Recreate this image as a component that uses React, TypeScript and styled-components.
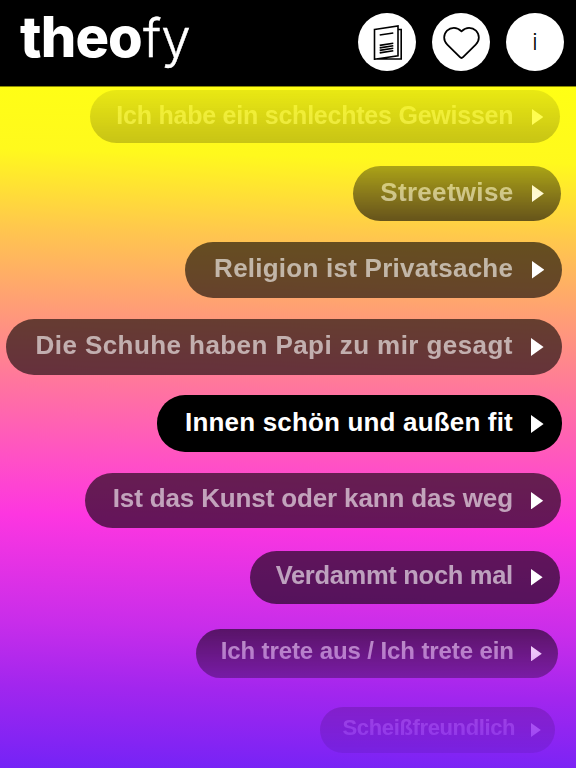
import React from "react";
import styled, { createGlobalStyle } from "styled-components";

const GlobalStyle = createGlobalStyle`
  * { box-sizing: border-box; }
  body { margin: 0; background: #000; }
`;

const Screen = styled.div`
  width: 576px;
  height: 768px;
  display: flex;
  flex-direction: column;
  overflow: hidden;
  font-family: "Liberation Sans", Arial, sans-serif;
  background: #000;
`;

const Header = styled.header`
  flex: 0 0 86px;
  display: flex;
  justify-content: space-between;
  padding: 13px 12px 0 20px;
`;

const Logo = styled.h1`
  display: flex;
  align-items: baseline;
  margin: 0;
  height: 60px;
  color: #fff;
  font-family: Inter, sans-serif;
  font-size: 56px;
  line-height: 49px;
  white-space: nowrap;
`;

const LogoBold = styled.span`
  width: 123px;
  font-weight: 800;
  letter-spacing: -0.9px;
`;

const LogoThin = styled.span`
  font-size: 53px;
  font-weight: 300;
  font-variant-ligatures: none;
  letter-spacing: 0;
  -webkit-text-stroke: 0.4px #fff;
`;

const Actions = styled.nav`
  display: flex;
  gap: 16px;
`;

const RoundButton = styled.button`
  width: 58px;
  height: 58px;
  padding: 0;
  border: 0;
  border-radius: 50%;
  display: flex;
  align-items: center;
  justify-content: center;
  background: #fff;
  color: #000;
  font: 300 23px/58px Inter, sans-serif;
`;

const Topics = styled.main`
  flex: 1;
  min-height: 0;
  border-top: 1px solid #8a8a00;
  background: linear-gradient(
    181.5deg,
    #ffff14 0%,
    #fff91d 11%,
    #ffc64e 22.5%,
    #ff9d76 33.5%,
    #ff759e 44.5%,
    #ff50c6 55.5%,
    #fd36e0 63.5%,
    #c82dea 79%,
    #a226ee 88%,
    #7423f6 100%
  );
`;

/* The wheel fades out towards its upper and lower ends. */
const Wheel = styled.ul`
  display: flex;
  flex-direction: column;
  align-items: flex-end;
  margin: 0;
  padding: 3px 0 0;
  height: 681px;
  list-style: none;
  mask-image: linear-gradient(
    180deg,
    rgba(0, 0, 0, 0.14) 3px,
    rgba(0, 0, 0, 0.36) 56px,
    rgba(0, 0, 0, 0.55) 79px,
    #000 134px,
    #000 520px,
    rgba(0, 0, 0, 0.93) 542px,
    rgba(0, 0, 0, 0.5) 591px,
    rgba(0, 0, 0, 0.25) 620px,
    rgba(0, 0, 0, 0.12) 666px
  );
`;

type PillProps = {
  $w: number;
  $h: number;
  $after: number;
  $edge: number;
  $pad: number;
  $active?: boolean;
};

const Pill = styled.li<PillProps>`
  flex: none;
  display: flex;
  align-items: center;
  justify-content: flex-end;
  width: ${(p) => p.$w}px;
  height: ${(p) => p.$h}px;
  margin: 0 ${(p) => p.$edge}px ${(p) => p.$after}px 0;
  padding-right: ${(p) => p.$pad}px;
  border-radius: 28px;
  color: ${(p) => (p.$active ? "#fff" : "rgba(255, 255, 255, 0.6)")};
  background: ${(p) => (p.$active ? "#000" : "rgba(0, 0, 0, 0.6)")};
`;

const Label = styled.span<{ $size: number; $track: number; $gap?: number }>`
  padding-bottom: 4px;
  margin-right: ${(p) => p.$gap ?? 18.5}px;
  font-weight: 700;
  font-size: ${(p) => p.$size}px;
  letter-spacing: ${(p) => p.$track}px;
  line-height: 30px;
  white-space: nowrap;
`;

const Arrow = styled.svg`
  flex: none;
  fill: #fff;
`;

const topics = [
  { text: "Ich habe ein schlechtes Gewissen", w: 469.5, h: 53, after: 23, edge: 16.5, pad: 16.5, size: 25, track: -0.23, arrow: 16 },
  { text: "Streetwise", w: 207.8, h: 55, after: 21, edge: 15.2, pad: 17, size: 26, track: 0.3, arrow: 17 },
  { text: "Religion ist Privatsache", w: 376.8, h: 56.4, after: 20.4, edge: 14.2, pad: 17.8, size: 26, track: 0.24, arrow: 17.6 },
  { text: "Die Schuhe haben Papi zu mir gesagt", w: 556, h: 56.7, after: 19.9, edge: 14, pad: 18, size: 26, track: 0.43, arrow: 18 },
  { text: "Innen schön und außen fit", w: 405.4, h: 56.7, after: 20.9, edge: 14, pad: 18, size: 26, track: 0.17, arrow: 18, active: true },
  { text: "Ist das Kunst oder kann das weg", w: 476, h: 55, after: 22.8, edge: 15, pad: 17.4, size: 26, track: -0.14, arrow: 17.4 },
  { text: "Verdammt noch mal", w: 309.5, h: 53, after: 25, edge: 16.5, pad: 16.5, size: 25.5, track: -0.3, arrow: 16.6 },
  { text: "Ich trete aus / Ich trete ein", w: 361.5, h: 49.5, after: 28.5, edge: 18.5, pad: 15.4, size: 24, track: -0.1, arrow: 15.4, gap: 17.5 },
  { text: "Scheißfreundlich", w: 235, h: 46, after: 0, edge: 21, pad: 14, size: 22, track: -0.36, arrow: 14, gap: 16 },
];

function PapersIcon() {
  return (
    <svg width="29" height="35" viewBox="0 0 29 35" fill="none" stroke="#000" strokeWidth="1.6">
      <path d="M1.5 4.5 25 1V30.8L1.5 34.2ZM25 4.5H28.2V34H1.5" />
      <path d="M6.7 10 20.3 8M6.7 20.4 20.3 18.2M6.7 22.9 20.3 20.7M6.7 25.4 20.3 23.2M6.7 27.9 20.3 25.7" />
    </svg>
  );
}

function HeartIcon() {
  return (
    <svg width="37" height="36" viewBox="0 0 38 36" fill="none" stroke="#000" strokeWidth="1.8" strokeLinejoin="round">
      <path d="M19 7C16 4.1 13.6 3.4 11.2 3.4C5.7 3.4 1.2 7.8 1.2 13.4C1.2 16.6 2.4 18.7 4.4 20.6L17.4 33.6C18.4 34.6 19.6 34.6 20.6 33.6L33.6 20.6C35.6 18.7 36.8 16.6 36.8 13.4C36.8 7.8 32.3 3.4 26.8 3.4C24.4 3.4 22 4.1 19 7Z" />
    </svg>
  );
}

export default function App() {
  return (
    <>
      <GlobalStyle />
      <Screen>
        <Header>
          <Logo>
            <LogoBold>theo</LogoBold>
            <LogoThin>fy</LogoThin>
          </Logo>
          <Actions>
            <RoundButton><PapersIcon /></RoundButton>
            <RoundButton><HeartIcon /></RoundButton>
            <RoundButton>i</RoundButton>
          </Actions>
        </Header>
        <Topics>
          <Wheel>
            {topics.map((t) => (
              <Pill key={t.text} $w={t.w} $h={t.h} $after={t.after} $edge={t.edge} $pad={t.pad} $active={t.active}>
                <Label $size={t.size} $track={t.track} $gap={t.gap}>{t.text}</Label>
                <Arrow width={t.arrow * 0.7} height={t.arrow} viewBox="0 0 7 10" preserveAspectRatio="none">
                  <path d="M0 0 7 5 0 10Z" />
                </Arrow>
              </Pill>
            ))}
          </Wheel>
        </Topics>
      </Screen>
    </>
  );
}
